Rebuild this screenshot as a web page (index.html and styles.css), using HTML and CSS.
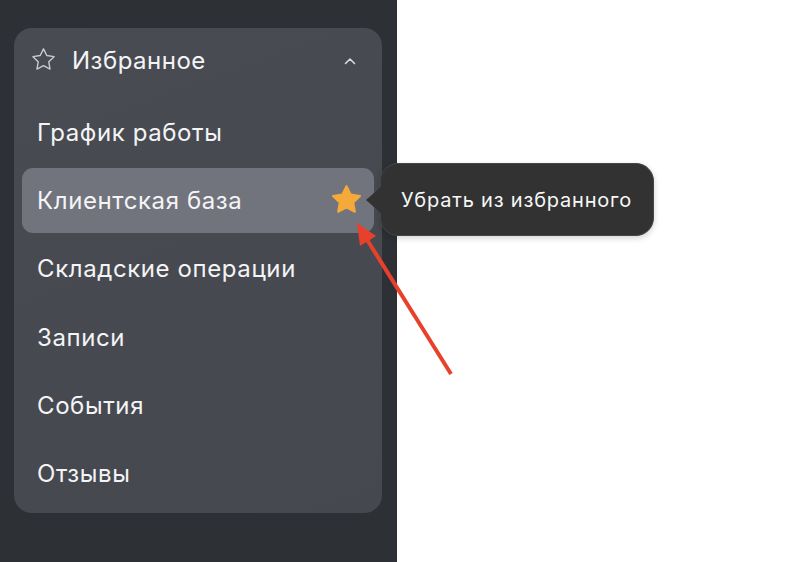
FILE: index.html
```html
<!DOCTYPE html>
<html lang="ru">
<head>
<meta charset="utf-8">
<link rel="stylesheet" href="styles.css">
</head>
<body>
<div class="page">
  <aside class="sidebar">
    <section class="card">
      <header class="card-head">
        <svg class="star-outline" width="27" height="27" viewBox="0 0 24 24"><path d="M12 2.6l2.9 5.9 6.5.95-4.7 4.58 1.1 6.47L12 17.45l-5.8 3.05 1.1-6.47L2.6 9.45l6.5-.95z" fill="none" stroke="#c9cacf" stroke-width="1.25" stroke-linejoin="round"/></svg>
        <span class="head-title">Избранное</span>
        <svg class="chevron" width="12" height="8" viewBox="0 0 12 8"><path d="M1.5 6.5L6 2l4.5 4.5" fill="none" stroke="#d8d9dd" stroke-width="1.6" stroke-linecap="round" stroke-linejoin="round"/></svg>
      </header>
      <ul class="list">
        <li class="item">График работы</li>
        <li class="item active">Клиентская база
          <svg class="star-fill" width="35" height="35" viewBox="0 0 24 24"><path d="M12 2.8l2.85 5.8 6.4.93-4.63 4.5 1.1 6.37L12 17.4l-5.72 3l1.1-6.37-4.63-4.5 6.4-.93z" fill="#f5a93a" stroke="#f5a93a" stroke-width="1.4" stroke-linejoin="round"/></svg>
        </li>
        <li class="item">Складские операции</li>
        <li class="item">Записи</li>
        <li class="item">События</li>
        <li class="item">Отзывы</li>
      </ul>
    </section>
  </aside>
  <main class="main"></main>

  <div class="tooltip">Убрать из избранного</div>

  <svg class="pointer" width="810" height="562" viewBox="0 0 810 562">
    <line x1="451" y1="374" x2="366" y2="238" stroke="#e8412b" stroke-width="4"/>
    <polygon points="357,223 376,236 360,246" fill="#e8412b"/>
  </svg>
</div>
</body>
</html>
```

FILE: styles.css
```css
* { box-sizing: border-box; }
html, body { margin: 0; padding: 0; }
body {
  font-family: Inter, "Noto Sans", "Liberation Sans", sans-serif;
  background: #ffffff;
}
.page {
  position: relative;
  width: 810px;
  height: 562px;
  display: flex;
  overflow: hidden;
}
.sidebar {
  width: 397px;
  height: 562px;
  background: #2d3034;
  padding: 28px 15px 0 14px;
}
.main { flex: 1; background: #fff; }
.card {
  background: linear-gradient(160deg, #484b52 0%, #45484e 100%);
  border-radius: 18px;
  height: 485px;
  padding: 0 8px;
}
.card-head {
  height: 64px;
  display: flex;
  align-items: center;
  padding-left: 8px;
  padding-right: 18px;
  color: #f4f4f6;
}
.star-outline { margin-right: 15px; margin-top: -2px; }
.head-title {
  font-size: 24px;
  letter-spacing: 0.5px;
  flex: 1;
}
.chevron { margin-top: 2px; }
.list {
  list-style: none;
  margin: 7.5px 0 0;
  padding: 0;
  display: flex;
  flex-direction: column;
  gap: 3.4px;
}
.item {
  height: 65px;
  display: flex;
  align-items: center;
  justify-content: space-between;
  padding: 0 10px 0 15px;
  border-radius: 11px;
  color: #f4f4f6;
  font-size: 24px;
  letter-spacing: 0.6px;
}
.item.active { background: #71737d; }
.star-fill { margin-top: -1px; }
.tooltip {
  position: absolute;
  left: 380px;
  top: 163px;
  width: 274px;
  height: 73px;
  background: #323232;
  border: 1px solid #464646;
  border-radius: 18px;
  box-shadow: 0 2px 6px rgba(0,0,0,0.18);
  color: #f7f7f7;
  font-size: 20px;
  letter-spacing: 0.8px;
  display: flex;
  align-items: center;
  padding-left: 20px;
}
.tooltip::before {
  content: "";
  position: absolute;
  left: -15px;
  top: 21px;
  width: 17px;
  height: 30px;
  background: #323232;
  clip-path: polygon(100% 0, 0 50%, 100% 100%);
}
.pointer {
  position: absolute;
  left: 0;
  top: 0;
  pointer-events: none;
}
```
